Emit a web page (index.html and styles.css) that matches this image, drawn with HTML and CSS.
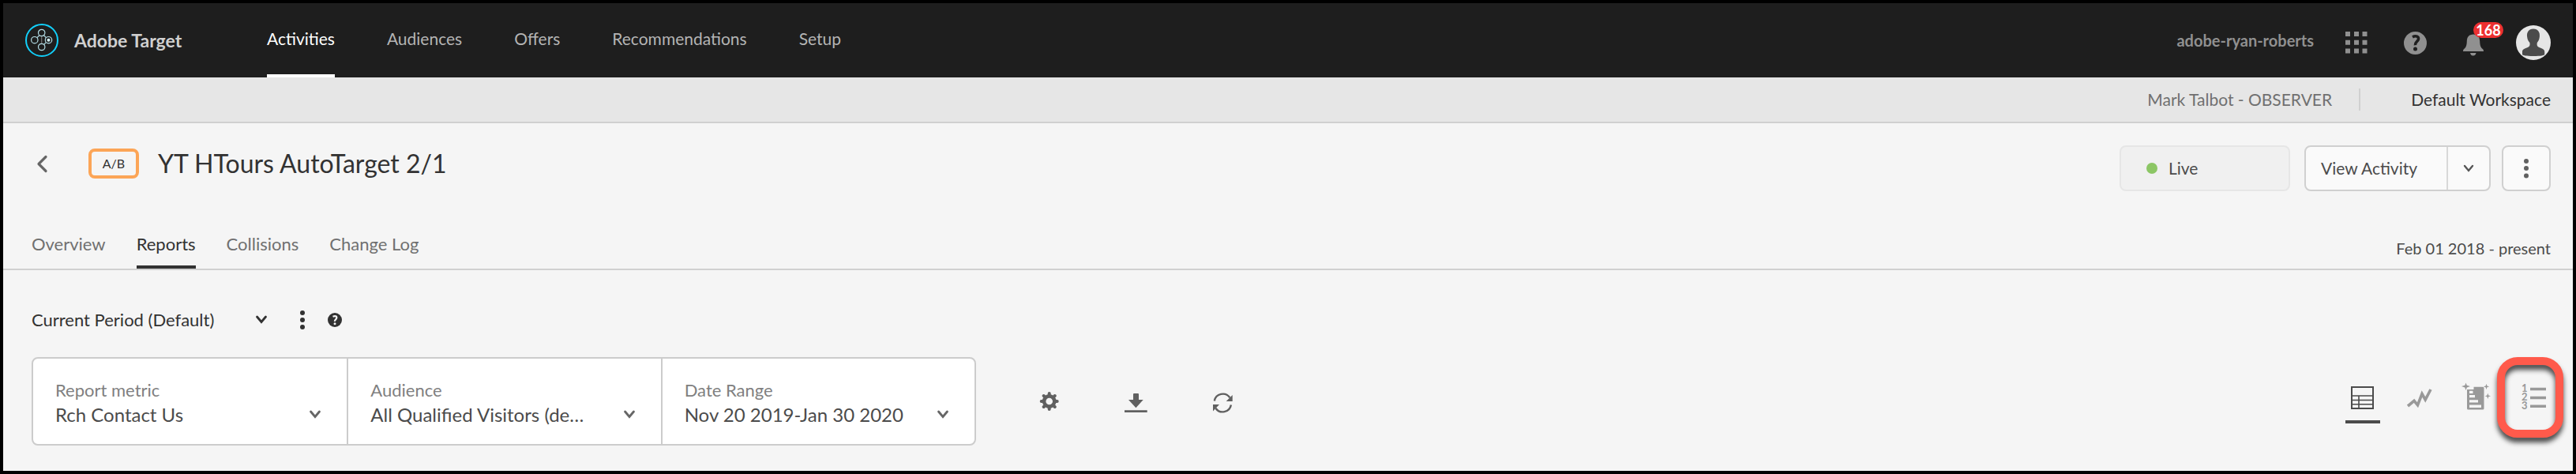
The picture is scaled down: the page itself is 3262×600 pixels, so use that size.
FILE: index.html
```html
<!DOCTYPE html>
<html lang="en">
<head>
<meta charset="utf-8">
<title>Adobe Target</title>
<link rel="stylesheet" href="styles.css">
</head>
<body>
<div class="app">
  <header class="topbar">
    <a class="brand" href="#">
      <svg class="brand-logo" viewBox="0 0 42 42" fill="none" aria-hidden="true">
        <circle cx="21" cy="21" r="20" stroke="#12d0fb" stroke-width="2"/>
        <g stroke="#b5dfe8" stroke-width="1.2">
          <circle cx="20.700" cy="11.500" r="4.200"/><circle cx="11.800" cy="20.700" r="4.200"/>
          <circle cx="20.700" cy="29.500" r="4.200"/><circle cx="29.500" cy="20.700" r="4.200"/>
          <path d="M15 17.700l2.700-2.900M23.700 14.800l2.700 2.900M23.700 26.400l2.700-2.700"/>
        </g>
        <path d="M20.700 16v9" stroke="#777" stroke-width="1.200"/>
        <circle cx="29.500" cy="20.700" r="2" fill="#d5f2f8"/>
      </svg>
      <span class="brand-name">Adobe Target</span>
    </a>
    <nav class="mainnav">
      <a class="mainnav-link is-active" href="#">Activities</a>
      <a class="mainnav-link" href="#">Audiences</a>
      <a class="mainnav-link" href="#">Offers</a>
      <a class="mainnav-link" href="#">Recommendations</a>
      <a class="mainnav-link" href="#">Setup</a>
    </nav>
    <span class="org">adobe-ryan-roberts</span>
    <div class="topbar-icons">
      <button class="icon-btn" aria-label="Apps">
        <svg viewBox="0 0 44 44" fill="#909090"><path d="M6 8h6v6H6zM17 8h6v6h-6zM27.500 8h6v6h-6zM6 18.700h6v6H6zM17 18.700h6v6h-6zM27.500 18.700h6v6h-6zM6 29.400h6v6H6zM17 29.400h6v6h-6zM27.500 29.400h6v6h-6z"/></svg>
      </button>
      <button class="icon-btn" aria-label="Help">
        <svg viewBox="0 0 44 44"><circle cx="20.500" cy="22.500" r="14.500" fill="#909090"/><path d="M17 14.800c4.500-2.300 8.200-.5 7.400 3-.7 2.800-4.400 3.400-4 7.400" fill="none" stroke="#1e1e1e" stroke-width="3.600"/><circle cx="20.500" cy="30" r="2.500" fill="#1e1e1e"/></svg>
      </button>
      <button class="icon-btn" aria-label="Notifications">
        <svg viewBox="0 0 44 44" fill="#909090"><path d="M20 11.500c5.600 0 8 3.500 8.200 8.500.2 6.500 1.300 8 3.900 10.300.8.700.9 2.200.9 2.700H7c0-.5.100-2 .9-2.700 2.600-2.300 3.700-3.800 3.900-10.300.2-5 2.600-8.500 8.200-8.500zM16 35h7.500c-.4 2.500-2 3.500-3.800 3.500s-3.300-1-3.700-3.500z"/></svg>
        <span class="count">168</span>
      </button>
      <button class="icon-btn" aria-label="Profile">
        <svg viewBox="0 0 44 44"><circle cx="22" cy="22" r="22" fill="#e6e6e6"/><path d="M22 4.500c6 0 8.600 4.500 7.900 10-.4 4-2 6-3.100 7.500-.6 3.500.2 5 3.200 6.200 3.500 1.400 6.200 2.200 6.200 5.300V37c0 1-5 2-14.200 2S8 38 8 37v-3.500c0-3.100 2.700-3.900 6.200-5.300 3-1.200 3.800-2.700 3.200-6.200-1.300-1.500-2.900-3.500-3.300-7.500-.7-5.500 1.900-10 7.900-10z" fill="#4b4b4b"/></svg>
      </button>
    </div>
  </header>

  <div class="subbar">
    <span class="user-role">Mark Talbot - OBSERVER</span>
    <button class="workspace">Default Workspace</button>
  </div>

  <section class="activity">
    <div class="activity-head">
      <div class="activity-title">
        <button class="back" aria-label="Back"><svg viewBox="0 0 28 28"><path d="M18 5.500L9 14.500l9 9" fill="none" stroke="#666" stroke-width="3.200" stroke-linecap="round" stroke-linejoin="round"/></svg></button>
        <span class="kind">A/B</span>
        <h1 class="title">YT HTours AutoTarget 2/1</h1>
      </div>
      <div class="activity-actions">
        <span class="status"><span class="status-dot"></span>Live</span>
        <div class="split">
          <button class="split-main">View Activity</button>
          <button class="split-more" aria-label="More views"><svg class="chevron" viewBox="0 0 16 12"><path d="M3 3l5 6 5-6" fill="none" stroke="#555" stroke-width="2.400" stroke-linecap="round"/></svg></button>
        </div>
        <button class="more" aria-label="More actions"><svg class="dots" viewBox="0 0 8 28" fill="#606060"><circle cx="4" cy="5" r="3"/><circle cx="4" cy="14" r="3"/><circle cx="4" cy="23.500" r="3"/></svg></button>
      </div>
    </div>
    <div class="tabbar">
      <nav class="tabs">
        <a class="tab" href="#">Overview</a>
        <a class="tab is-active" href="#">Reports</a>
        <a class="tab" href="#">Collisions</a>
        <a class="tab" href="#">Change Log</a>
      </nav>
      <span class="dates">Feb 01 2018 - present</span>
    </div>
  </section>

  <main class="report">
    <div class="period">
      <div class="picker">
        <select class="period-select" aria-label="Report period"><option>Current Period (Default)</option></select>
        <svg class="chevron" viewBox="0 0 16 12"><path d="M2.500 2l5.500 6.500L13.500 2" fill="none" stroke="#323232" stroke-width="2.800" stroke-linecap="round"/></svg>
      </div>
      <button class="period-more" aria-label="Period actions"><svg class="dots" viewBox="0 0 8 28" fill="#323232"><circle cx="4" cy="5" r="3"/><circle cx="4" cy="14" r="3"/><circle cx="4" cy="23" r="3"/></svg></button>
      <button class="period-help" aria-label="Help"><svg viewBox="0 0 24 24"><circle cx="12" cy="12" r="9" fill="#323232"/><path d="M9.500 7.800c3-1.500 5.300-.3 4.700 1.900-.4 1.700-2.500 2-2.300 4.200" fill="none" stroke="#f5f5f5" stroke-width="2.200"/><circle cx="12" cy="16.800" r="1.500" fill="#f5f5f5"/></svg></button>
    </div>

    <div class="toolbar">
      <div class="filters">
        <div class="filter">
          <label class="filter-label" for="metric">Report metric</label>
          <div class="picker">
            <select class="filter-select" id="metric"><option>Rch Contact Us</option></select>
            <svg class="chevron" viewBox="0 0 16 12"><path d="M2.500 2l5.500 6.500L13.500 2" fill="none" stroke="#666" stroke-width="2.800" stroke-linecap="round"/></svg>
          </div>
        </div>
        <div class="filter">
          <label class="filter-label" for="audience">Audience</label>
          <div class="picker">
            <select class="filter-select" id="audience"><option>All Qualified Visitors (de…</option></select>
            <svg class="chevron" viewBox="0 0 16 12"><path d="M2.500 2l5.500 6.500L13.500 2" fill="none" stroke="#666" stroke-width="2.800" stroke-linecap="round"/></svg>
          </div>
        </div>
        <div class="filter">
          <label class="filter-label" for="range">Date Range</label>
          <div class="picker">
            <select class="filter-select" id="range"><option>Nov 20 2019-Jan 30 2020</option></select>
            <svg class="chevron" viewBox="0 0 16 12"><path d="M2.500 2l5.500 6.500L13.500 2" fill="none" stroke="#666" stroke-width="2.800" stroke-linecap="round"/></svg>
          </div>
        </div>
      </div>

      <div class="tools">
        <button class="tool" aria-label="Settings"><svg viewBox="0 0 40 40" fill="none" stroke="#606060"><circle cx="20.700" cy="20" r="6.600" stroke-width="4.600"/><path stroke-width="4" stroke-linecap="round" d="M20.700 12v-2M20.700 28v2M12.700 20h-2M28.700 20h2M15 14.300l-1.300-1.300M26.400 14.300l1.300-1.300M15 25.700L13.700 27M26.400 25.700l1.300 1.300"/></svg></button>
        <button class="tool" aria-label="Download"><svg viewBox="0 0 40 40" fill="#606060"><path d="M18 10h5a1 1 0 0 1 1 1v7h5.700l-9.300 10.300L11 18h6v-7a1 1 0 0 1 1-1zM6 31.300h28.700V34H6z"/></svg></button>
        <button class="tool" aria-label="Refresh"><svg viewBox="0 0 40 40" fill="#606060"><path d="M9.800 19.500a10.800 10.800 0 0 1 19.500-4.200M30.900 24.500a10.800 10.800 0 0 1-19.500 4.200" fill="none" stroke="#606060" stroke-width="2.400"/><path d="M32.700 12v8h-8zM8 24h8l-8 8.500z"/></svg></button>
      </div>

      <div class="views">
        <button class="view is-active" aria-label="Table view"><svg viewBox="0 0 44 40" fill="none" stroke="#4b4b4b"><rect x="8" y="6" width="27" height="27" stroke-width="2"/><path d="M8 17h27M8 22.500h27M8 27.700h27M17 17v16" stroke-width="1.600"/></svg></button>
        <button class="view" aria-label="Graph view"><svg viewBox="0 0 44 40"><path d="M7 30l8-6.700 4.500 5.500L25 14.500l4.200 7.500L36 9" fill="none" stroke="#999" stroke-width="3.600"/></svg></button>
        <button class="view" aria-label="Automated segments"><svg viewBox="0 0 44 40" fill="#999"><path d="M18.500 5.700H30a1.500 1.500 0 0 1 1.500 1.500V33a1.500 1.500 0 0 1-1.500 1.500H11.500A1.500 1.500 0 0 1 10 33V9h8.500z"/><path fill="#f5f5f5" d="M13 10.700h4.500V14H13zM13 16h7v3.300h-7zM13 22.300h11v3.300H13zM13 28.500h15V32H13z"/><path d="M8.500.500l1.300 3.200L14 5l-4.200 1.400L8.500 10 7.300 6.400 3 5l4.300-1.300zM34.500 1.800l.9 2.700 2.800.8-2.800 1-.9 2.700-.9-2.700-2.800-1 2.800-.8zM36.300 13.800l.9 2.700 2.800.8-2.800 1-.9 2.700-.9-2.700-2.800-1 2.800-.8z"/></svg></button>
        <button class="view" aria-label="Important attributes"><svg viewBox="0 0 44 40" fill="#999"><g class="list-digits"><text x="7" y="12">1</text><text x="7" y="23">2</text><text x="7" y="34">3</text></g><path d="M18 6.700h20v3.500H18zM18 17.700h20v3.500H18zM18 28.400h20v3.500H18z"/></svg><span class="callout"></span></button>
      </div>
    </div>
  </main>
</div>
</body>
</html>
```
FILE: styles.css
```css
* { box-sizing: border-box; }

body {
  margin: 0;
  font-family: Lato, "Open Sans", sans-serif;
  font-size: 21px;
  line-height: 28px;
  color: #4b4b4b;
}

a { color: inherit; text-decoration: none; }

button, select {
  margin: 0;
  padding: 0;
  border: 0;
  background: none;
  font: inherit;
  color: inherit;
}

svg { display: block; overflow: visible; }

.app {
  min-height: 100vh;
  border: 4px solid #000;
  background: #f5f5f5;
}

/* Top bar */
.topbar {
  display: flex;
  align-items: center;
  height: 94px;
  padding: 0 28px;
  background: #1e1e1e;
  color: #b4b4b4;
}

.brand {
  display: flex;
  align-items: center;
  gap: 20px;
  min-width: 306px;
}

.brand-logo { width: 42px; height: 42px; }

.brand-name {
  font-size: 23px;
  font-weight: 700;
  color: #d0d0d0;
}

.mainnav {
  display: flex;
  flex: 1;
  gap: 66px;
  align-self: stretch;
}

.mainnav-link {
  display: flex;
  align-items: center;
  border-bottom: 4px solid transparent;
}

.mainnav-link.is-active { color: #fff; border-bottom-color: #fff; }

.org {
  margin-right: 34px;
  font-size: 20px;
  font-weight: 700;
  color: #909090;
}

.topbar-icons { display: flex; gap: 30px; padding-top: 6px; }

.icon-btn { position: relative; width: 44px; height: 44px; }

.count {
  position: absolute;
  left: 20px;
  top: -4px;
  width: 38px;
  border-radius: 10px;
  background: #ec3030;
  color: #fff;
  font-size: 18px;
  font-weight: 700;
  line-height: 20px;
}

/* Workspace bar */
.subbar {
  display: flex;
  align-items: center;
  justify-content: flex-end;
  height: 58px;
  padding: 0 28px;
  border-bottom: 2px solid #d0d0d0;
  background: #e6e6e6;
}

.user-role { padding-right: 34px; color: #707070; }

.workspace {
  padding-left: 64px;
  border-left: 2px solid #d0d0d0;
  color: #323232;
}

/* Activity header */
.activity {
  padding: 28px 28px 0 36px;
  border-bottom: 2px solid #d0d0d0;
}

.activity-head { display: flex; justify-content: space-between; }

.activity-title { display: flex; align-items: center; height: 46px; }

.back { width: 28px; height: 28px; margin-right: 44px; }

.kind {
  width: 64px;
  margin-right: 24px;
  border: 4px solid #fca557;
  border-radius: 8px;
  font-size: 16px;
  line-height: 30px;
  text-align: center;
  color: #323232;
}

.title {
  margin: 0;
  font-size: 32px;
  font-weight: 400;
  line-height: 46px;
  color: #323232;
}

.activity-actions { display: flex; height: 58px; }

.status {
  display: flex;
  align-items: center;
  gap: 14px;
  width: 216px;
  margin-right: 18px;
  padding-left: 32px;
  border: 2px solid #e6e6e6;
  border-radius: 8px;
  background: #f0f0f0;
}

.status-dot {
  width: 14px;
  height: 14px;
  border-radius: 50%;
  background: #8cc665;
}

.split, .more {
  display: flex;
  border: 2px solid #d0d0d0;
  border-radius: 8px;
  background: #fafafa;
}

.split { width: 236px; margin-right: 14px; }

.split-main { flex: 1; padding-left: 19px; text-align: left; }

.split-more {
  display: grid;
  place-items: center;
  width: 54px;
  border-left: 2px solid #d8d8d8;
}

.more { align-items: center; justify-content: center; width: 62px; }

.chevron { width: 16px; height: 12px; }

.dots { width: 8px; height: 28px; }

.tabbar {
  display: flex;
  align-items: flex-end;
  justify-content: space-between;
  height: 98px;
}

.tabs { display: flex; gap: 39px; font-size: 22px; }

.tab {
  padding-bottom: 13px;
  border-bottom: 4px solid transparent;
  color: #707070;
}

.tab.is-active { color: #323232; border-bottom-color: #323232; }

.dates { padding-bottom: 12px; font-size: 20px; }

/* Report controls */
.report { padding: 47px 28px 32px 36px; }

.picker { display: grid; align-items: center; }

.picker > * { grid-area: 1 / 1; }

.picker > .chevron { justify-self: end; pointer-events: none; }

.picker select { width: 100%; appearance: none; }

.period {
  display: flex;
  align-items: center;
  height: 32px;
  margin-bottom: 31px;
  font-size: 22px;
  color: #323232;
}

.period .picker { width: 299px; margin-right: 32px; }

.period-select { height: 32px; }

.period-more {
  display: grid;
  place-items: center;
  width: 24px;
  margin-right: 17px;
}

.period-help { width: 24px; height: 24px; }

.toolbar { display: flex; align-items: center; height: 112px; }

.filters {
  display: grid;
  grid-template-columns: repeat(3, 1fr);
  width: 1196px;
  height: 112px;
  border: 2px solid #ccc;
  border-radius: 8px;
  background: #fff;
}

.filter { padding: 26px 32px 0 28px; }

.filter + .filter { border-left: 2px solid #ccc; }

.filter-label { display: block; font-size: 22px; color: #808080; }

.filter-select { height: 34px; font-size: 24px; }

.tools { display: flex; flex: 1; gap: 70px; margin-left: 72px; }

.tool { width: 40px; height: 40px; }

.views { display: flex; gap: 28px; align-self: flex-end; padding-bottom: 28px; }

.view {
  position: relative;
  width: 44px;
  padding-bottom: 8px;
  border-bottom: 4px solid transparent;
}

.view.is-active { border-bottom-color: #4b4b4b; }

.view svg { width: 44px; height: 40px; }

.list-digits { font-size: 13px; font-weight: 700; }

.callout {
  position: absolute;
  left: -24px;
  top: -32px;
  width: 84px;
  height: 102px;
  border: 10px solid #ff5a4b;
  border-radius: 26px;
  filter: drop-shadow(0 6px 3px rgba(0, 0, 0, 0.7));
  pointer-events: none;
}
```
